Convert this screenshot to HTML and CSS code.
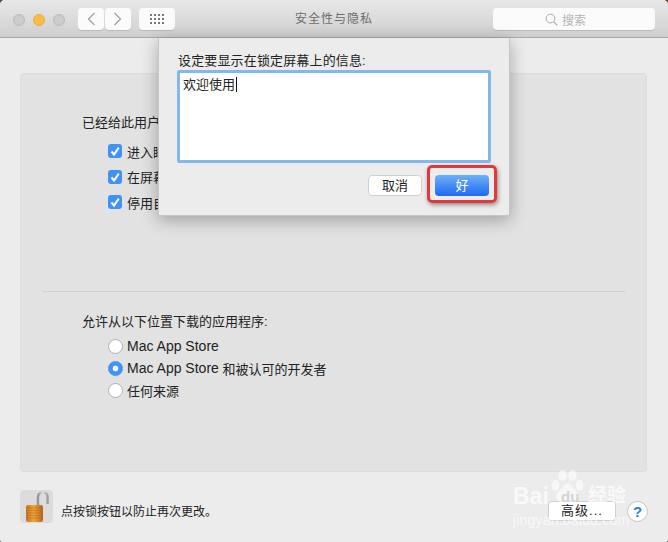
FILE: index.html
```html
<!DOCTYPE html>
<html lang="zh-CN">
<head>
    <meta charset="UTF-8">
    <meta name="viewport" content="width=device-width, initial-scale=1.0">
    <title>安全性与隐私</title>
    <link rel="stylesheet" href="styles.css">
</head>
<body>

    <div class="window">
        <div class="titlebar">
            <div class="lights">
                <span class="light"></span>
                <span class="light light-yellow"></span>
                <span class="light"></span>
            </div>
            <div class="nav-group">
                <div class="tool-btn nav-btn">
                    <svg width="10" height="16" viewBox="0 0 10 16"><path d="M8.500 2 L2.500 8 L8.500 14" fill="none" stroke="#a2a2a2" stroke-width="1.3"/></svg>
                </div>
                <div class="tool-btn nav-btn">
                    <svg width="10" height="16" viewBox="0 0 10 16"><path d="M1.500 2 L7.500 8 L1.500 14" fill="none" stroke="#a2a2a2" stroke-width="1.3"/></svg>
                </div>
            </div>
            <div class="tool-btn grid-btn">
                <svg width="14" height="10" viewBox="0 0 14 10" fill="#777">
                    <rect x="0" y="0" width="2" height="2"/><rect x="4" y="0" width="2" height="2"/><rect x="8" y="0" width="2" height="2"/><rect x="12" y="0" width="2" height="2"/>
                    <rect x="0" y="4" width="2" height="2"/><rect x="4" y="4" width="2" height="2"/><rect x="8" y="4" width="2" height="2"/><rect x="12" y="4" width="2" height="2"/>
                    <rect x="0" y="8" width="2" height="2"/><rect x="4" y="8" width="2" height="2"/><rect x="8" y="8" width="2" height="2"/><rect x="12" y="8" width="2" height="2"/>
                </svg>
            </div>
            <div class="title">安全性与隐私</div>
            <div class="search">
                <svg width="13" height="13" viewBox="0 0 13 13"><circle cx="5.500" cy="5.500" r="4.400" fill="none" stroke="#a8a8a8" stroke-width="1"/><path d="M8.800 8.800 L12.300 12.300" stroke="#a8a8a8" stroke-width="1.200"/></svg>
                <span>搜索</span>
            </div>
        </div>

        <div class="content">
            <div class="panel">
                <div class="section-top">
                    <p class="label">已经给此用户设定登录密码</p>
                    <div class="checks">
                        <div class="check-row"><span class="checkbox"><svg width="14" height="14" viewBox="0 0 14 14"><path d="M3.500 7.500 L6 10.500 L10.800 3.600" fill="none" stroke="#fff" stroke-width="2"/></svg></span>进入睡眠或开始屏幕保护程序</div>
                        <div class="check-row"><span class="checkbox"><svg width="14" height="14" viewBox="0 0 14 14"><path d="M3.500 7.500 L6 10.500 L10.800 3.600" fill="none" stroke="#fff" stroke-width="2"/></svg></span>在屏幕锁定时显示信息</div>
                        <div class="check-row"><span class="checkbox"><svg width="14" height="14" viewBox="0 0 14 14"><path d="M3.500 7.500 L6 10.500 L10.800 3.600" fill="none" stroke="#fff" stroke-width="2"/></svg></span>停用自动登录</div>
                    </div>
                </div>
                <div class="divider"></div>
                <div class="section-bottom">
                    <p class="label">允许从以下位置下载的应用程序:</p>
                    <div class="radios">
                        <div class="radio-row"><span class="radio"></span><span class="latin">Mac App Store</span></div>
                        <div class="radio-row"><span class="radio radio-on"></span><span class="latin">Mac App Store</span>&nbsp;和被认可的开发者</div>
                        <div class="radio-row"><span class="radio"></span>任何来源</div>
                    </div>
                </div>
            </div>

            <div class="footer">
                <div class="lock">
                    <svg width="33" height="33" viewBox="0 0 33 33">
                        <defs>
                            <linearGradient id="brass" x1="0" y1="0" x2="1" y2="0">
                                <stop offset="0" stop-color="#c9701c"/>
                                <stop offset="0.45" stop-color="#eda63c"/>
                                <stop offset="1" stop-color="#b8641a"/>
                            </linearGradient>
                            <linearGradient id="steel" x1="0" y1="0" x2="1" y2="0">
                                <stop offset="0" stop-color="#8f979e"/>
                                <stop offset="0.5" stop-color="#d9dee2"/>
                                <stop offset="1" stop-color="#99a2a9"/>
                            </linearGradient>
                        </defs>
                        <path d="M18 16 V8 C18 4 20 2.500 23 2.500 C26 2.500 27.500 4.500 27.500 8 V14" fill="none" stroke="url(#steel)" stroke-width="2.600"/>
                        <rect x="6" y="15" width="17" height="17" rx="2" fill="url(#brass)"/>
                        <path d="M6 18 H23 M6 20.500 H23 M6 23 H23 M6 25.500 H23 M6 28 H23" stroke="#b5651c" stroke-width="0.700" opacity="0.700"/>
                    </svg>
                </div>
                <span class="lock-text">点按锁按钮以防止再次更改。</span>
                <div class="footer-right">
                    <div class="adv-btn">高级...</div>
                    <div class="help-btn">?</div>
                </div>
            </div>
        </div>

        <div class="sheet">
            <p class="sheet-label">设定要显示在锁定屏幕上的信息:</p>
            <div class="sheet-input"><span class="typed">欢迎使用</span></div>
            <div class="sheet-buttons">
                <div class="btn">取消</div>
                <div class="ok-mark"><div class="btn btn-primary">好</div></div>
            </div>
        </div>

        <div class="watermark">
            <svg class="paw" width="34" height="34" viewBox="0 0 62 62" fill="#fff">
                <ellipse cx="10" cy="28" rx="7" ry="10"/>
                <ellipse cx="23" cy="10" rx="7.500" ry="10"/>
                <ellipse cx="41" cy="10" rx="7.500" ry="10"/>
                <ellipse cx="54" cy="28" rx="7" ry="10"/>
                <path d="M32 25 C24 25 21 34 15 40 C8 47 12 60 23 59 C27 58.500 29 57 32 57 C35 57 37 58.500 41 59 C52 60 56 47 49 40 C43 34 40 25 32 25 Z"/>
            </svg>
            <span class="wm-bai">Bai</span>
            <span class="wm-du">du</span>
            <span class="wm-cn">经验</span>
            <span class="wm-url">jingyan.baidu.com</span>
        </div>
    </div>

</body>
</html>
```

FILE: styles.css
```css
* {
    box-sizing: border-box;
}

html, body {
    margin: 0;
    height: 100%;
}

body {
    background: #6b4a2a;
    font-family: "Liberation Sans", "Noto Sans CJK SC", sans-serif;
    font-size: 13px;
    color: #222;
    overflow: hidden;
}

.window {
    position: relative;
    width: 668px;
    height: 542px;
    display: flex;
    flex-direction: column;
    background: #ececec;
    border-radius: 5px 5px 2px 2px;
    overflow: hidden;
}

.titlebar {
    position: relative;
    height: 38px;
    flex: none;
    display: flex;
    align-items: flex-start;
    padding: 8px 0 0 13px;
    background: linear-gradient(#e9e8e9, #d0cfd0);
    border-bottom: 1px solid #a9a9a9;
}

.lights {
    display: flex;
    gap: 8px;
    margin: 6px 0 0 0;
}

.light {
    width: 12px;
    height: 12px;
    border-radius: 50%;
    background: #cdcccd;
    border: 1px solid #bababa;
}

.light-yellow {
    background: #f7bd45;
    border-color: #eeaf3a;
}

.nav-group {
    display: flex;
    gap: 1px;
    margin-left: 13px;
}

.tool-btn {
    height: 22px;
    display: flex;
    align-items: center;
    justify-content: center;
    background: #fbfbfb;
    border-radius: 4px;
    box-shadow: 0 1px 0 #b9b9b9;
}

.nav-btn {
    width: 26px;
}

.grid-btn {
    width: 36px;
    margin-left: 8px;
}

.title {
    position: absolute;
    left: 295px;
    top: 11px;
    font-size: 12px;
    letter-spacing: 1px;
    line-height: 16px;
    color: #6d6c6d;
}

.search {
    margin-left: auto;
    margin-right: 13px;
    width: 162px;
    height: 22px;
    display: flex;
    align-items: center;
    gap: 4px;
    padding-left: 52px;
    background: #fbfbfb;
    border-radius: 4px;
    box-shadow: 0 1px 0 #b9b9b9;
    font-size: 12px;
    color: #b4b4b4;
}

.content {
    flex: 1;
    display: flex;
    flex-direction: column;
    padding: 35px 21px 0 20px;
}

.panel {
    height: 399px;
    flex: none;
    padding: 0 21px;
    background: #e2e2e2;
    border: 1px solid #dcdcdc;
    border-radius: 4px;
}

.label {
    margin: 0;
    padding-left: 40px;
    line-height: 18px;
}

.section-top {
    height: 217px;
    padding-top: 40px;
}

.checks {
    display: flex;
    flex-direction: column;
    gap: 7.500px;
    margin-top: 10px;
    padding-left: 66px;
}

.check-row {
    display: flex;
    align-items: center;
    gap: 5px;
    height: 18px;
}

.checkbox {
    width: 14px;
    height: 14px;
    display: block;
    background: #3f93f7;
    border-radius: 3px;
}

.checkbox svg {
    display: block;
}

.divider {
    height: 1px;
    background: #cfcfcf;
}

.section-bottom {
    padding-top: 21px;
}

.radios {
    display: flex;
    flex-direction: column;
    gap: 4px;
    margin-top: 6px;
    padding-left: 66px;
}

.radio-row {
    display: flex;
    align-items: center;
    height: 18px;
}

.latin {
    font-size: 14px;
}

.radio {
    width: 15px;
    height: 15px;
    margin-right: 4px;
    border-radius: 50%;
    background: #fff;
    border: 1px solid #b0b0b0;
}

.radio-on {
    background: radial-gradient(circle, #fff 0 2.500px, #3f93f7 3.200px);
    border-color: #3f93f7;
}

.footer {
    display: flex;
    align-items: flex-start;
    margin-top: 18px;
}

.lock {
    width: 33px;
    height: 33px;
    background: #dcdcdc;
    border-radius: 4px;
}

.lock svg {
    display: block;
}

.lock-text {
    margin: 14px 0 0 8px;
    font-size: 12px;
    line-height: 16px;
}

.footer-right {
    margin-left: auto;
    display: flex;
    align-items: flex-start;
    gap: 11px;
    margin-top: 11px;
}

.adv-btn {
    width: 68px;
    height: 20px;
    background: #fff;
    border: 1px solid #d0d0d0;
    border-radius: 3px;
    text-align: center;
    letter-spacing: 1px;
    line-height: 18px;
}

.help-btn {
    width: 21px;
    height: 21px;
    margin-right: -1px;
    border-radius: 50%;
    background: #fff;
    border: 1px solid #c2c2c2;
    color: #2f7de8;
    font-size: 15px;
    font-weight: bold;
    text-align: center;
    line-height: 19px;
}

.sheet {
    position: absolute;
    left: 158px;
    top: 38px;
    width: 352px;
    height: 178px;
    padding: 14px 20px 0 20px;
    background: #ececec;
    border: 1px solid #c6c6c6;
    border-top: none;
    box-shadow: 0 4px 16px rgba(0, 0, 0, 0.3);
}

.sheet-label {
    margin: 0 0 0 -1px;
    line-height: 18px;
    letter-spacing: 0.150px;
}

.sheet-input {
    width: 314px;
    height: 93px;
    margin-left: -2px;
    padding: 3px 3px;
    background: #fff;
    border: 3px solid #82b8ee;
    border-radius: 2px;
    line-height: 18px;
}

.typed {
    border-right: 1px solid #111;
    padding-right: 1px;
}

.sheet-buttons {
    display: flex;
    justify-content: flex-end;
    align-items: flex-start;
    gap: 13px;
    margin-top: 12px;
}

.btn {
    width: 54px;
    height: 21px;
    background: #fff;
    border: 1px solid #cfcfcf;
    border-radius: 4px;
    text-align: center;
    line-height: 19px;
}

.btn-primary {
    border: none;
    color: #fff;
    line-height: 21px;
    background: linear-gradient(#6fb0f8, #1c6af3);
}

/* red annotation around the ok button */
.ok-mark {
    margin: -10px -8px -7px -8px;
    padding: 7px 5px 4px 5px;
    border: 3px solid #e0393b;
    border-radius: 5px;
    box-shadow: 1px 2px 4px rgba(0, 0, 0, 0.4);
}

.watermark {
    position: absolute;
    left: 510px;
    top: 468px;
    width: 122px;
    height: 60px;
    color: rgba(255, 255, 255, 0.7);
    pointer-events: none;
}

.watermark span {
    position: absolute;
    white-space: nowrap;
}

.paw {
    position: absolute;
    left: 40px;
    top: 2px;
    opacity: 0.6;
}

.wm-bai {
    left: 3px;
    top: 15px;
    font-size: 23px;
    font-weight: bold;
    line-height: 26px;
}

.wm-du {
    left: 51px;
    top: 20px;
    font-size: 15px;
    font-weight: bold;
    line-height: 18px;
    color: #d4d4d4;
}

.wm-cn {
    left: 78px;
    top: 15px;
    font-size: 19px;
    font-weight: bold;
    line-height: 26px;
}

.wm-url {
    left: 3px;
    top: 44px;
    font-size: 14px;
    letter-spacing: 0.200px;
    line-height: 16px;
}
```
